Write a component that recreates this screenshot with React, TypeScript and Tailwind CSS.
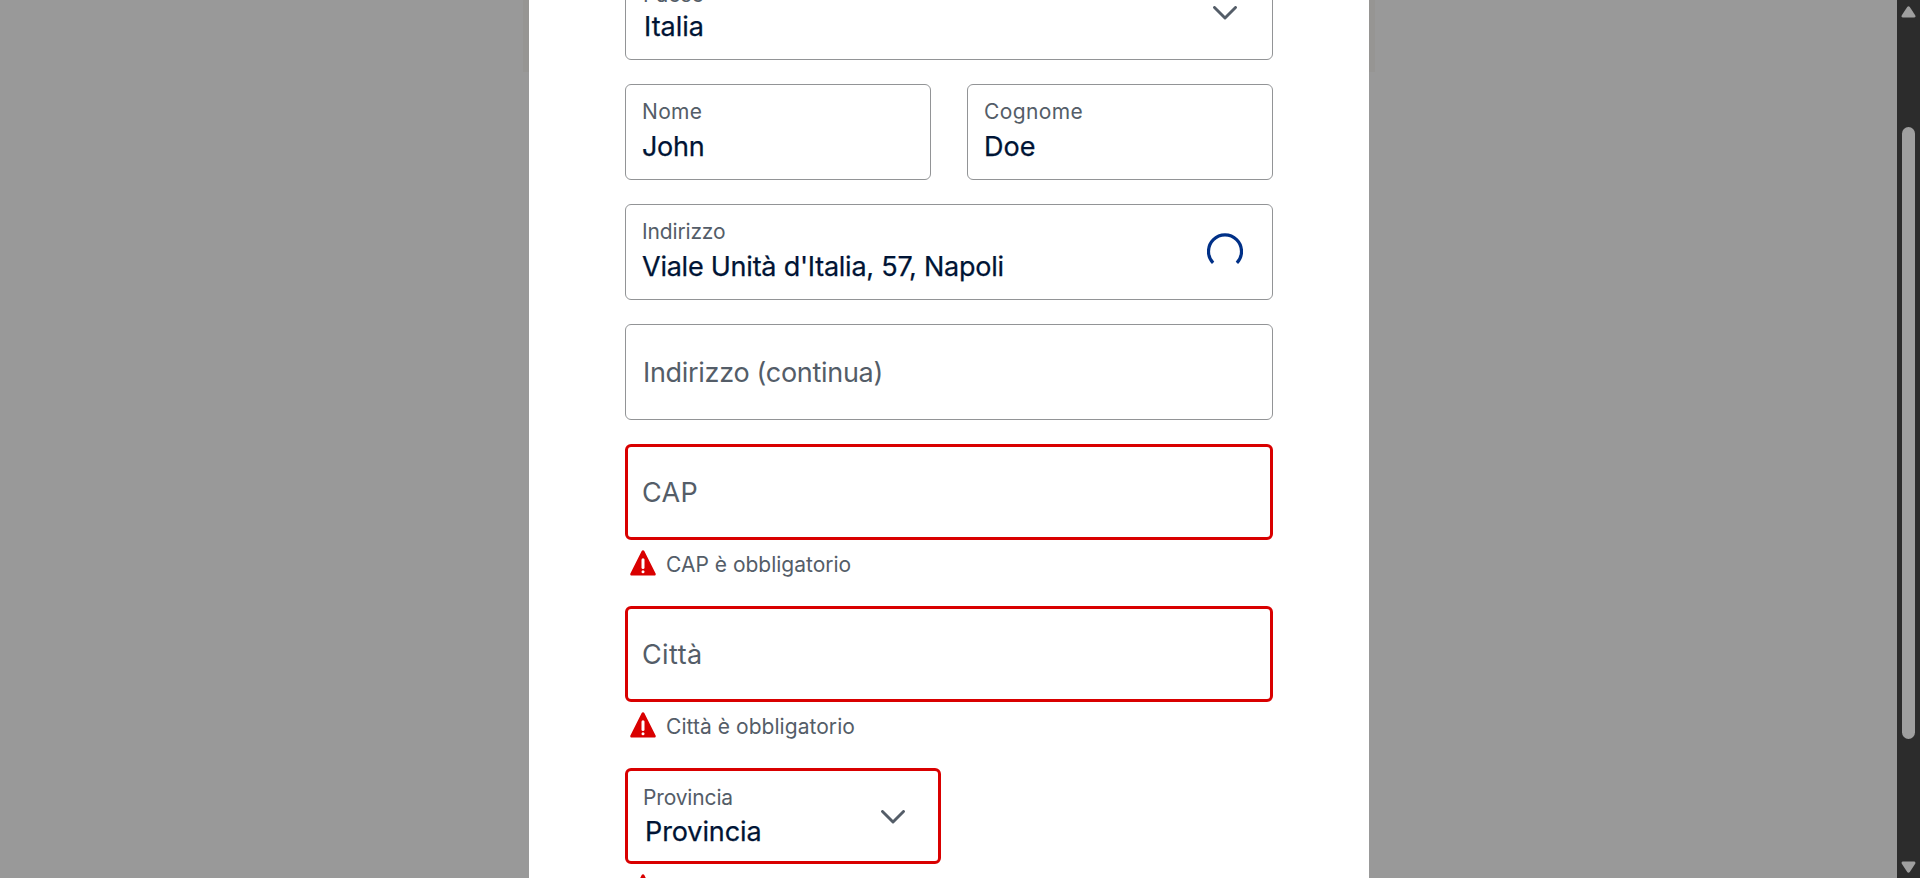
import type { ReactNode } from 'react';

const LABEL = 'whitespace-nowrap text-[21px] leading-6 text-[#545d68]';
const VALUE = 'whitespace-nowrap text-[27px] leading-9 text-[#001435] [-webkit-text-stroke:0.25px_#001435]';
const PLACEHOLDER = 'mt-[2px] whitespace-nowrap text-[27px] leading-9 text-[#545d68]';

function Chevron() {
  return (
    <svg className="h-[14px] w-6 shrink-0" viewBox="0 0 24 14" fill="none" stroke="#545d68" strokeWidth="2.9" strokeLinecap="round" strokeLinejoin="round">
      <path d="M1.5 1.5 12 12 22.5 1.5" />
    </svg>
  );
}

function Spinner() {
  return (
    <svg className="size-9 shrink-0" viewBox="0 0 36 36" fill="none" stroke="#003087" strokeWidth="3.2">
      <path d="M6.1 29.9A16.5 16.5 0 1 1 29.9 29.9" />
    </svg>
  );
}

function Warning() {
  return (
    <svg className="h-[26px] w-[26px] shrink-0" viewBox="0 0 26 26">
      <path d="M11.7 1.1a1.5 1.5 0 0 1 2.6 0L25.6 23.6a1.3 1.3 0 0 1-1.2 1.9H1.6A1.3 1.3 0 0 1 .4 23.6Z" fill="#d90000" />
      <rect x="11.5" y="8.3" width="3" height="10.7" rx="1.5" fill="#fff" />
      <circle cx="13" cy="21.8" r="1.5" fill="#fff" />
    </svg>
  );
}

function Filled({ className, label, value, labelClass, valueClass, icon }: {
  className: string; label: string; value: string; labelClass: string; valueClass: string; icon?: ReactNode;
}) {
  return (
    <div className={`flex h-24 justify-between rounded-md bg-white ${className}`}>
      <div className="flex flex-col">
        <span className={`${LABEL} ${labelClass}`}>{label}</span>
        <span className={`${VALUE} ${valueClass}`}>{value}</span>
      </div>
      {icon}
    </div>
  );
}

function ErrorText({ text, className }: { text: string; className: string }) {
  return (
    <div className="mt-[10px] mb-[30px] ml-[5px] flex h-[26px] items-center gap-[10px]">
      <Warning />
      <span className={`${LABEL} mt-[4px] ${className}`}>{text}</span>
    </div>
  );
}

export default function App() {
  return (
    <div className="flex h-[878px] w-[1920px] overflow-hidden bg-[#999999] font-['Inter','Liberation_Sans',sans-serif]">
      <main className="flex flex-1 justify-center pl-px">
        <div className="h-[72px] w-[6px] bg-[#969593]" />
        <section className="h-[878px] w-[840px] overflow-hidden bg-white px-24">
          <div className="-mt-9 flex flex-col">
            <Filled
              className="border border-[#929496] pt-[18px] pr-[35px] pl-[17px]"
              label="Paese" value="Italia" labelClass="" valueClass="mt-[2px] ml-px"
              icon={<div className="pt-[23px]"><Chevron /></div>}
            />
            <div className="mt-6 grid grid-cols-2 gap-9">
              <Filled className="border border-[#929496] pt-[15px] pl-4" label="Nome" value="John" labelClass="tracking-[0.35px]" valueClass="mt-[5px] tracking-[-0.3px]" />
              <Filled className="border border-[#929496] pt-[15px] pl-4" label="Cognome" value="Doe" labelClass="tracking-[0.4px]" valueClass="mt-[5px]" />
            </div>
            <Filled
              className="mt-6 border border-[#929496] pt-[15px] pr-[29px] pl-4"
              label="Indirizzo" value="Viale Unità d'Italia, 57, Napoli" labelClass="tracking-[-0.15px]" valueClass="mt-[5px] tracking-[-0.24px]"
              icon={<div className="pt-[13px]"><Spinner /></div>}
            />
            <div className="mt-6 flex h-24 items-center rounded-md border border-[#929496] pl-[17px]">
              <span className={`${PLACEHOLDER} tracking-[-0.3px]`}>Indirizzo (continua)</span>
            </div>
            <div className="mt-6 flex h-24 items-center rounded-md border-3 border-[#d90000] pl-[14px]">
              <span className={`${PLACEHOLDER} tracking-[0.3px]`}>CAP</span>
            </div>
            <ErrorText text="CAP è obbligatorio" className="" />
            <div className="flex h-24 items-center rounded-md border-3 border-[#d90000] pl-[14px]">
              <span className={`${PLACEHOLDER} tracking-[0.4px]`}>Città</span>
            </div>
            <ErrorText text="Città è obbligatorio" className="tracking-[0.05px]" />
            <Filled
              className="w-[316px] border-3 border-[#d90000] pt-[15px] pr-[33px] pl-[15px]"
              label="Provincia" value="Provincia" labelClass="tracking-[-0.15px]" valueClass="mt-[4px] ml-[2px] tracking-[-0.1px]"
              icon={<div className="pt-[24px]"><Chevron /></div>}
            />
            <div className="mt-[10px] ml-[5px]"><Warning /></div>
          </div>
        </section>
        <div className="h-[72px] w-[6px] bg-[#969593]" />
      </main>
      <aside className="flex w-[23px] flex-col items-center bg-[#2c2c2c]">
        <svg className="mt-[6px] h-3 w-[15px]" viewBox="0 0 15 12"><path d="M6.2 1Q7.5-.3 8.8 1L14.2 9.2Q15 11.5 13 11.5H2Q0 11.5.8 9.2Z" fill="#9f9f9f" /></svg>
        <div className="mt-[109px] h-[612px] w-[13px] rounded-full bg-[#9f9f9f]" />
        <svg className="mt-[122px] h-3 w-[15px]" viewBox="0 0 15 12"><path d="M6.2 11Q7.5 12.3 8.8 11L14.2 2.8Q15 .5 13 .5H2Q0 .5.8 2.8Z" fill="#9f9f9f" /></svg>
      </aside>
    </div>
  );
}
